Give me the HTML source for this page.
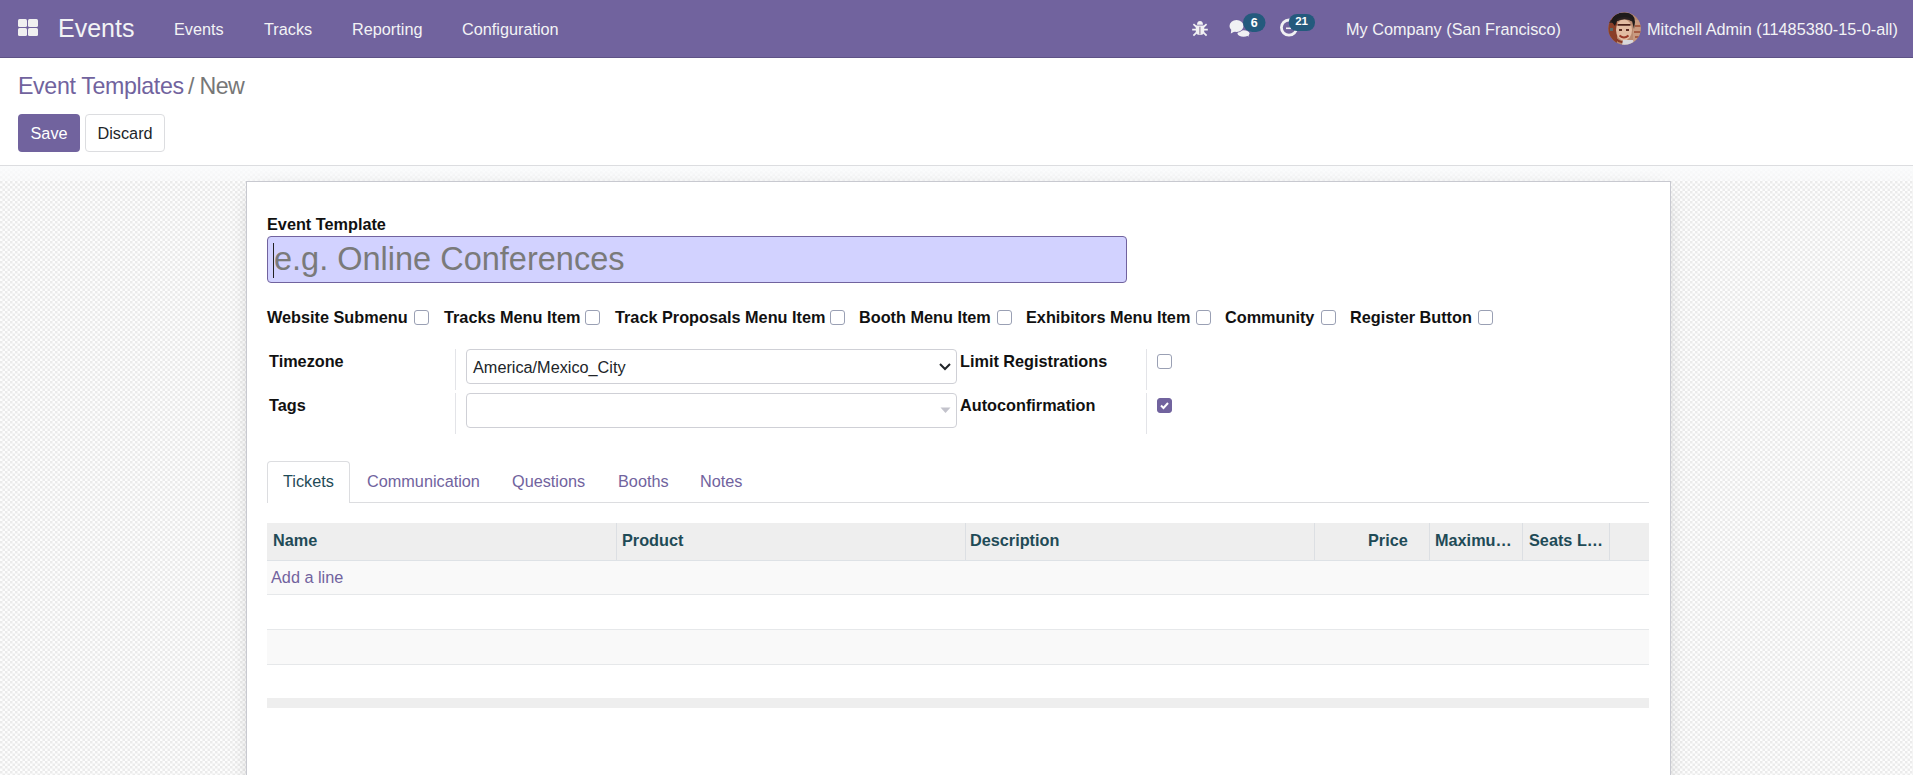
<!DOCTYPE html>
<html><head><meta charset="utf-8">
<style>
*{box-sizing:border-box;margin:0;padding:0}
html,body{width:1913px;height:775px;overflow:hidden;background:#fff;font-family:"Liberation Sans",sans-serif;}
.a{position:absolute}
.t{position:absolute;white-space:nowrap;line-height:1}
#nav{position:absolute;left:0;top:0;width:1913px;height:58px;background:#71639e;border-bottom:1px solid #5e5286}
#nav .t{color:#f3f3f5}
#cp{position:absolute;left:0;top:58px;width:1913px;height:108px;background:#fff;border-bottom:1px solid #dcdde0}
#bg{position:absolute;left:0;top:166px;width:1913px;height:609px;
 background-color:#f4f4f4;
 background-image:repeating-conic-gradient(#ededed 0 25%, #fcfcfc 0 50%);
 background-size:5px 5px;}
#band{position:absolute;left:0;top:166px;width:1913px;height:15px;background:linear-gradient(rgba(250,251,252,.97),rgba(250,251,252,.55))}
#sheet{position:absolute;left:246px;top:181px;width:1425px;height:620px;background:#fff;border:1px solid #c8c9d0;box-shadow:0 5px 20px -10px rgba(0,0,0,.35)}
.lbl{font-weight:bold;font-size:16.25px;color:#111}
.cb{position:absolute;width:15px;height:15px;border:1px solid #9aa0b4;border-radius:3px;background:#fff}
.btn{position:absolute;height:38px;border-radius:4px;font-size:16.25px}
.th{font-weight:bold;font-size:16.25px;color:#1f4b57}
</style></head><body>
<div id="nav">
  <div class="a" style="left:18px;top:19px;width:9px;height:8px;background:#f0f0f0;border-radius:1.5px"></div>
  <div class="a" style="left:28px;top:19px;width:10px;height:8px;background:#f0f0f0;border-radius:1.5px"></div>
  <div class="a" style="left:18px;top:28px;width:9px;height:8px;background:#f0f0f0;border-radius:1.5px"></div>
  <div class="a" style="left:28px;top:28px;width:10px;height:8px;background:#f0f0f0;border-radius:1.5px"></div>
  <div class="t" style="left:58px;top:15.6px;font-size:25px">Events</div>
  <div class="t" style="left:174px;top:21.2px;font-size:16.25px">Events</div>
  <div class="t" style="left:264px;top:21.2px;font-size:16.25px">Tracks</div>
  <div class="t" style="left:352px;top:21.2px;font-size:16.25px">Reporting</div>
  <div class="t" style="left:462px;top:21.2px;font-size:16.25px">Configuration</div>

  <svg class="a" style="left:1188px;top:16px" width="24" height="24" viewBox="0 0 24 24">
    <path d="M9 8.8 A3 3.8 0 0 1 15 8.8 Z" fill="#f1f1f3"/>
    <path d="M7.8 9.6 H16.2 V15.5 Q16.2 19 12 19 Q7.8 19 7.8 15.5 Z" fill="#f1f1f3"/>
    <path d="M11.9 10.8 V18.6" stroke="#8c7a9c" stroke-width="1.1"/>
    <path d="M5.4 8.2 L8.6 11 M4.2 13.6 H8.2 M8.4 16.6 L5.4 19.6 M18.6 8.2 L15.4 11 M19.8 13.6 H15.8 M15.6 16.6 L18.6 19.6" stroke="#f1f1f3" stroke-width="1.7"/>
  </svg>
  <svg class="a" style="left:1225px;top:10px" width="42" height="30" viewBox="0 0 42 30">
    <ellipse cx="18.5" cy="23.5" rx="6" ry="3.3" fill="#f1f1f3"/>
    <path d="M20 24 L23.5 26.8 L24 22 Z" fill="#f1f1f3"/>
    <ellipse cx="11.5" cy="16" rx="7.6" ry="6.6" fill="#71639e"/>
    <ellipse cx="11.5" cy="16" rx="7" ry="6" fill="#f1f1f3"/>
    <path d="M6.3 19.5 L5.8 23.6 L10.5 21 Z" fill="#f1f1f3"/>
    <rect x="18" y="3.3" width="22.5" height="18.7" rx="9.35" fill="#245a7d"/>
    <text x="29.3" y="17.2" font-family="Liberation Sans" font-weight="bold" font-size="12.5" fill="#fff" text-anchor="middle">6</text>
  </svg>
  <svg class="a" style="left:1276px;top:10px" width="42" height="30" viewBox="0 0 42 30">
    <circle cx="13" cy="17.6" r="7.6" fill="none" stroke="#f1f1f3" stroke-width="2.8"/>
    <path d="M10 18.3 H15" stroke="#f1f1f3" stroke-width="1.6"/>
    <rect x="12.8" y="3.9" width="26.2" height="17.2" rx="8.3" fill="#245a7d"/>
    <text x="25.6" y="14.9" font-family="Liberation Sans" font-weight="bold" font-size="11.5" fill="#fff" text-anchor="middle">21</text>
  </svg>
  <div class="t" style="left:1346px;top:21px;font-size:16.25px">My Company (San Francisco)</div>
  <svg class="a" style="left:1608px;top:12px" width="33" height="33" viewBox="0 0 33 33">
    <defs><clipPath id="cc"><circle cx="16.5" cy="16.5" r="16.2"/></clipPath></defs>
    <g clip-path="url(#cc)">
      <rect width="33" height="33" fill="#b98a70"/>
      <rect x="0" y="0" width="9" height="33" fill="#8a3f28"/>
      <rect x="1" y="8" width="4" height="3" fill="#3a2a28"/>
      <rect x="2" y="16" width="3" height="3" fill="#5a6a6a"/>
      <rect x="25" y="8" width="8" height="25" fill="#c89a80"/>
      <path d="M27 14 H33 M26 20 H33 M27 25 H33" stroke="#9a4a30" stroke-width="1.3"/>
      <path d="M3 9 Q6 0 17 0.5 Q27 1 27 10 L26 17 L24 9 Q17 5 9 9 L7 14 Z" fill="#1e1a1a"/>
      <ellipse cx="16" cy="18" rx="8" ry="10.5" fill="#e2bca2"/>
      <path d="M8.5 9.5 Q17 5 24 9.5 L24 7 Q17 3 9 7 Z" fill="#2a2020"/>
      <path d="M9.5 12.8 H22.5" stroke="#4a2018" stroke-width="1.8"/>
      <rect x="11" y="17" width="3" height="2" fill="#5a2a20"/>
      <rect x="18" y="17" width="3" height="2" fill="#5a2a20"/>
      <path d="M11.5 23.5 Q16 27.5 20.5 23.5" stroke="#9a3a28" stroke-width="2" fill="none"/>
      <path d="M8 27 Q12 31 16 30" stroke="#8a3a28" stroke-width="2" fill="none"/>
      <path d="M15 28 L25 28 L26 33 L14 33 Z" fill="#d8d8dc"/>
    </g>
  </svg>
  <div class="t" style="left:1647px;top:21px;font-size:16.25px">Mitchell Admin (11485380-15-0-all)</div>
</div>
<div id="cp">
  <div class="t" style="left:18px;top:17px;font-size:23.2px;color:#71639e;letter-spacing:-0.35px">Event Templates</div><div class="t" style="left:188px;top:17px;font-size:23.2px;color:#777">/</div><div class="t" style="left:199.5px;top:17px;font-size:23.2px;color:#777;letter-spacing:-0.6px">New</div>
  <div class="btn" style="left:18px;top:56px;width:62px;background:#71639e;color:#fff"><span class="t" style="left:12.5px;top:10.5px">Save</span></div>
  <div class="btn" style="left:85px;top:56px;width:80px;background:#fff;border:1px solid #dcdde0;color:#212529"><span class="t" style="left:11.5px;top:9.5px">Discard</span></div>
</div>
<svg id="bgsvg" class="a" style="left:0;top:166px" width="1913" height="609"><defs><pattern id="chk" x="0" y="0" width="5" height="5" patternUnits="userSpaceOnUse"><rect width="5" height="5" fill="#fdfdfd"/><rect x="0" y="0" width="2.5" height="2.5" fill="#ebebeb"/><rect x="2.5" y="2.5" width="2.5" height="2.5" fill="#ebebeb"/></pattern></defs><rect width="1913" height="609" fill="url(#chk)"/></svg>
<div id="band"></div>
<div id="sheet"></div>
<div class="t lbl" style="left:267px;top:216px">Event Template</div>
<div class="a" style="left:267px;top:236px;width:860px;height:47px;background:#d2d2ff;border:1px solid #71639e;border-radius:4px"></div>
<div class="t" style="left:274px;top:243px;font-size:32.5px;color:#7a7a7a">e.g. Online Conferences</div>
<div class="a" style="left:273px;top:243px;width:1px;height:35px;background:#222"></div>

<div class="t lbl" style="left:267px;top:309px">Website Submenu</div><div class="cb" style="left:414px;top:310px"></div>
<div class="t lbl" style="left:444px;top:309px">Tracks Menu Item</div><div class="cb" style="left:585px;top:310px"></div>
<div class="t lbl" style="left:615px;top:309px">Track Proposals Menu Item</div><div class="cb" style="left:830px;top:310px"></div>
<div class="t lbl" style="left:859px;top:309px">Booth Menu Item</div><div class="cb" style="left:997px;top:310px"></div>
<div class="t lbl" style="left:1026px;top:309px">Exhibitors Menu Item</div><div class="cb" style="left:1196px;top:310px"></div>
<div class="t lbl" style="left:1225px;top:309px">Community</div><div class="cb" style="left:1321px;top:310px"></div>
<div class="t lbl" style="left:1350px;top:309px">Register Button</div><div class="cb" style="left:1478px;top:310px"></div>

<div class="t lbl" style="left:269px;top:353px">Timezone</div>
<div class="t lbl" style="left:269px;top:397px">Tags</div>
<div class="a" style="left:455px;top:349px;width:1px;height:41px;background:#e3e4e8"></div>
<div class="a" style="left:455px;top:393px;width:1px;height:41px;background:#e3e4e8"></div>
<div class="a" style="left:466px;top:349px;width:491px;height:35px;border:1px solid #cfd0d6;border-radius:4px;background:#fff"></div>
<div class="t" style="left:473px;top:359px;font-size:16.25px;color:#212529">America/Mexico_City</div>
<svg class="a" style="left:938px;top:361px" width="14" height="11" viewBox="0 0 14 11"><path d="M2 3 L7 8 L12 3" fill="none" stroke="#212529" stroke-width="2"/></svg>
<div class="a" style="left:466px;top:393px;width:491px;height:35px;border:1px solid #cfd0d6;border-radius:4px;background:#fff"></div>
<svg class="a" style="left:940px;top:407px" width="11" height="7" viewBox="0 0 11 7"><path d="M0.5 0.5 L10.5 0.5 L5.5 6 Z" fill="#c3c3cc"/></svg>

<div class="t lbl" style="left:960px;top:353px">Limit Registrations</div>
<div class="t lbl" style="left:960px;top:397px">Autoconfirmation</div>
<div class="a" style="left:1146px;top:349px;width:1px;height:41px;background:#e3e4e8"></div>
<div class="a" style="left:1146px;top:393px;width:1px;height:41px;background:#e3e4e8"></div>
<div class="cb" style="left:1157px;top:354px"></div>
<div class="cb" style="left:1157px;top:398px;background:#71639e;border-color:#71639e"></div>
<svg class="a" style="left:1157px;top:398px" width="15" height="15" viewBox="0 0 15 15"><path d="M4 7.5 L6.5 10 L11 5" fill="none" stroke="#fff" stroke-width="2"/></svg>

<div class="a" style="left:267px;top:502px;width:1382px;height:1px;background:#dcdde0"></div>
<div class="a" style="left:267px;top:461px;width:83px;height:42px;background:#fff;border:1px solid #dcdde0;border-bottom:none;border-radius:4px 4px 0 0"></div>
<div class="t" style="left:283px;top:473px;font-size:16.25px;color:#1f4b57">Tickets</div>
<div class="t" style="left:367px;top:473px;font-size:16.25px;color:#71639e">Communication</div>
<div class="t" style="left:512px;top:473px;font-size:16.25px;color:#71639e">Questions</div>
<div class="t" style="left:618px;top:473px;font-size:16.25px;color:#71639e">Booths</div>
<div class="t" style="left:700px;top:473px;font-size:16.25px;color:#71639e">Notes</div>

<div class="a" style="left:267px;top:523px;width:1382px;height:38px;background:#eeeeee;border-bottom:1px solid #dee2e6"></div>
<div class="a" style="left:616px;top:523px;width:1px;height:37px;background:#dcdfe3"></div>
<div class="a" style="left:965px;top:523px;width:1px;height:37px;background:#dcdfe3"></div>
<div class="a" style="left:1314px;top:523px;width:1px;height:37px;background:#dcdfe3"></div>
<div class="a" style="left:1429px;top:523px;width:1px;height:37px;background:#dcdfe3"></div>
<div class="a" style="left:1522px;top:523px;width:1px;height:37px;background:#dcdfe3"></div>
<div class="a" style="left:1609px;top:523px;width:1px;height:37px;background:#dcdfe3"></div>
<div class="t th" style="left:273px;top:532px">Name</div>
<div class="t th" style="left:622px;top:532px">Product</div>
<div class="t th" style="left:970px;top:532px">Description</div>
<div class="t th" style="left:1368px;top:532px">Price</div>
<div class="t th" style="left:1435px;top:532px">Maximu…</div>
<div class="t th" style="left:1529px;top:532px">Seats L…</div>
<div class="a" style="left:267px;top:561px;width:1382px;height:34px;background:#f9f9f9;border-bottom:1px solid #e6e8ea"></div>
<div class="t" style="left:271px;top:569px;font-size:16.25px;color:#71639e">Add a line</div>
<div class="a" style="left:267px;top:595px;width:1382px;height:35px;background:#fff;border-bottom:1px solid #e6e8ea"></div>
<div class="a" style="left:267px;top:630px;width:1382px;height:35px;background:#f9f9f9;border-bottom:1px solid #e6e8ea"></div>
<div class="a" style="left:267px;top:665px;width:1382px;height:33px;background:#fff"></div>
<div class="a" style="left:267px;top:698px;width:1382px;height:10px;background:#eeeeee"></div>

</body></html>
